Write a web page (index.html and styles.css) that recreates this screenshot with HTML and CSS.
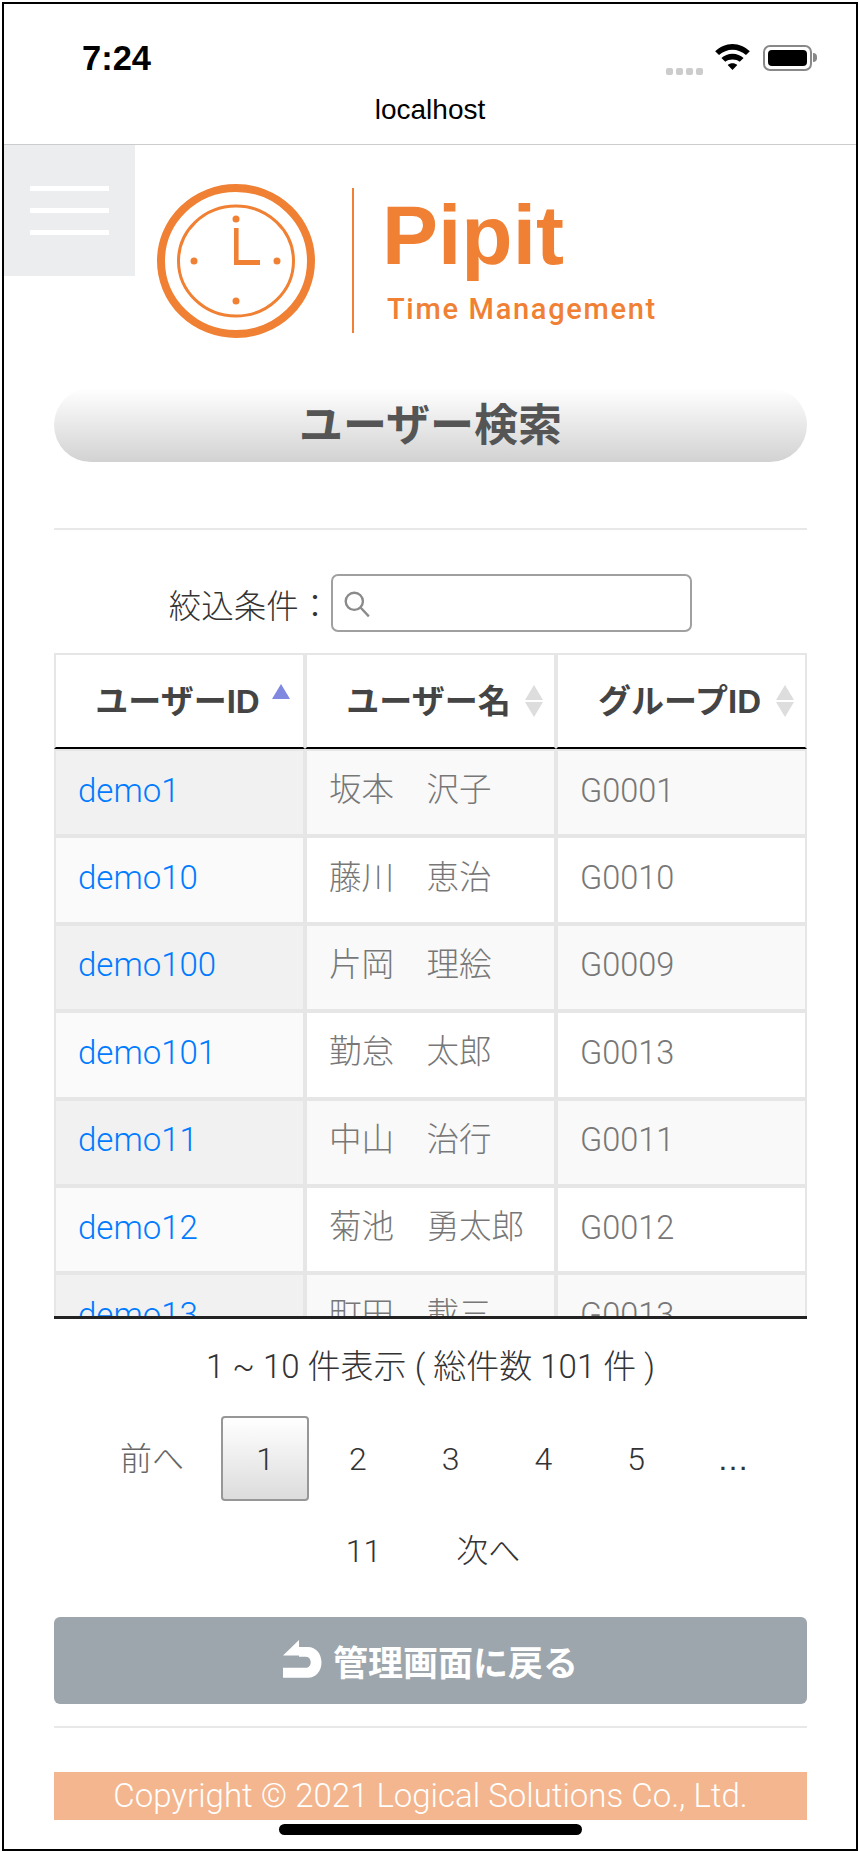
FILE: index.html
```html
<!DOCTYPE html>
<html lang="ja">
<head>
<meta charset="utf-8">
<title>Pipit</title>
<link rel="stylesheet" href="styles.css">
</head>
<body>
<div class="device">
  <header class="statusbar">
    <span class="time">7:24</span>
    <div class="status-icons">
      <div class="signal"><i></i><i></i><i></i><i></i></div>
      <svg class="wifi" viewBox="0 0 36 27" width="35" height="26"><path d="M18 0C11 0 5 3 0 7.500l4 4C8 8 13 6 18 6s10 2 14 5.500l4-4C31 3 25 0 18 0z"/><path d="M18 10c-4.500 0-8.500 1.800-11.500 4.500l4 4C12.500 16.800 15 16 18 16s5.500.8 7.500 2.500l4-4C26.500 11.800 22.500 10 18 10z"/><path d="M18 20c-2 0-3.500.6-5 1.800L18 27l5-5.200C21.500 20.600 20 20 18 20z"/></svg>
      <div class="battery"><span class="battery-fill"></span></div>
      <span class="battery-tip"></span>
    </div>
  </header>
  <div class="urlbar">localhost</div>
  <main class="page">
    <div class="topbar">
      <button class="menu" aria-label="menu"><span></span><span></span><span></span></button>
      <div class="logo">
        <svg class="clock" viewBox="0 0 160 156" width="160" height="156">
          <ellipse cx="80" cy="78" rx="75" ry="73" class="ring-o"/>
          <ellipse cx="80" cy="78" rx="57.500" ry="55" class="ring-i"/>
          <circle cx="80" cy="36" r="3.500"/><circle cx="80" cy="118" r="3.500"/>
          <circle cx="38" cy="78" r="3.500"/><circle cx="121" cy="78" r="3.500"/>
          <path d="M78 45h4.600v32H104v5H78z"/>
        </svg>
        <span class="logo-rule"></span>
        <div class="logo-text">
          <span class="logo-name">Pipit</span>
          <span class="logo-sub">Time Management</span>
        </div>
      </div>
    </div>
    <div class="content">
      <h1 class="title">ユーザー検索</h1>
      <hr class="rule rule-top">
      <div class="filter">
        <label class="filter-label" for="q">絞込条件：</label>
        <div class="search">
          <svg viewBox="0 0 26 26" width="28" height="28"><circle cx="10.500" cy="10.500" r="8" /><path d="M16.500 16.500l7.500 8"/></svg>
          <input id="q" type="text">
        </div>
      </div>
      <div class="table-wrap">
        <table class="grid">
          <thead>
            <tr>
              <th class="c1"><span class="th-label">ユーザーID</span><span class="sort only-up"></span></th>
              <th class="c2"><span class="th-label">ユーザー名</span><span class="sort"></span></th>
              <th class="c3"><span class="th-label">グループID</span><span class="sort"></span></th>
            </tr>
          </thead>
          <tbody>
            <tr class="odd"><td><a href="#">demo1</a></td><td>坂本　沢子</td><td>G0001</td></tr>
            <tr><td><a href="#">demo10</a></td><td>藤川　恵治</td><td>G0010</td></tr>
            <tr class="odd"><td><a href="#">demo100</a></td><td>片岡　理絵</td><td>G0009</td></tr>
            <tr><td><a href="#">demo101</a></td><td>勤怠　太郎</td><td>G0013</td></tr>
            <tr class="odd"><td><a href="#">demo11</a></td><td>中山　治行</td><td>G0011</td></tr>
            <tr><td><a href="#">demo12</a></td><td>菊池　勇太郎</td><td>G0012</td></tr>
            <tr class="odd"><td><a href="#">demo13</a></td><td>町田　載三</td><td>G0013</td></tr>
          </tbody>
        </table>
      </div>
      <p class="info">1 ~ 10 件表示 ( 総件数 101 件 )</p>
      <nav class="pager">
        <a class="pg pg-text pg-prev">前へ</a>
        <a class="pg current">1</a>
        <a class="pg">2</a>
        <a class="pg">3</a>
        <a class="pg">4</a>
        <a class="pg">5</a>
        <span class="pg ellipsis">…</span>
        <a class="pg pg-low">11</a>
        <a class="pg pg-text pg-low">次へ</a>
      </nav>
      <a class="back">
        <svg viewBox="0 0 39 38" width="39" height="38"><path class="back-fill" d="M16 0L0 15.500H16V16.700H23C26 16.700 27.700 19.500 27.700 22.200C27.700 25 26 27.700 23 27.700H0V37.700H25C33 37.700 38.500 31 38.500 22.500C38.500 14 33 7 25 7H16Z"/></svg>
        <span>管理画面に戻る</span>
      </a>
      <hr class="rule rule-bottom">
      <footer class="copyright">Copyright © 2021 Logical Solutions Co., Ltd.</footer>
    </div>
    <div class="homebar"></div>
  </main>
</div>
</body>
</html>
```
FILE: styles.css
```css
* { box-sizing: border-box; }
html, body { margin: 0; padding: 0; background: #fff; }
body {
  font-family: "Liberation Sans", "Noto Sans CJK JP", sans-serif;
  color: #333;
}
.device {
  width: 856px;
  height: 1849px;
  margin: 2px 0 0 2px;
  border: 2px solid #000;
  overflow: hidden;
  background: #fff;
  display: flex;
  flex-direction: column;
}
.statusbar {
  height: 82px;
  display: flex;
  justify-content: space-between;
  align-items: flex-start;
  padding: 36px 0 0 78px;
}
.time { font-size: 34.500px; font-weight: 700; line-height: 36px; color: #000; }
.status-icons { display: flex; align-items: flex-start; padding: 4px 39px 0 0; }
.signal { display: flex; gap: 3px; margin: 24px 12px 0 0; }
.signal i { width: 7px; height: 7px; border-radius: 2px; background: #ccc; display: block; }
.wifi { fill: #000; margin-right: 13px; }
.battery {
  width: 49px; height: 26px; padding: 3px; margin-top: 1px;
  border: 2px solid #888; border-radius: 7px;
}
.battery-fill { display: block; width: 100%; height: 100%; background: #000; border-radius: 4px; }
.battery-tip { width: 4px; height: 9px; margin: 9px 0 0 1px; background: #888; border-radius: 0 4px 4px 0; }
.urlbar {
  height: 59px;
  font-size: 28px;
  line-height: 34px;
  text-align: center;
  color: #000;
  border-bottom: 1px solid #ccc;
  padding-top: 7px;
}
.page { flex: 1; display: flex; flex-direction: column; position: relative; }
.topbar { height: 243px; position: relative; }
.menu {
  position: absolute; left: 0; top: 0;
  width: 131px; height: 131px;
  background: #ecedef; border: 0; padding: 41px 26px 0 26px;
  display: flex; flex-direction: column; gap: 17px;
}
.menu span { display: block; width: 79px; height: 5px; background: #fff; }
.logo { position: absolute; left: 152px; top: 38px; display: flex; align-items: flex-start; }
.clock { fill: #f08033; }
.ring-o { fill: none; stroke: #f08033; stroke-width: 8; }
.ring-i { fill: none; stroke: #f08033; stroke-width: 3; }
.logo-rule { width: 2px; height: 145px; background: #f08033; margin: 5px 0 0 36px; }
.logo-text { margin-left: 28px; display: flex; flex-direction: column; color: #f08033; }
.logo-name { font-size: 84px; font-weight: 700; line-height: 100px; margin-top: 2px; }
.logo-sub { font-family: "Roboto", sans-serif; font-size: 29px; font-weight: 500; letter-spacing: 1.700px; line-height: 36px; margin: 6px 0 0 5px; white-space: nowrap; }
.content { padding: 0 49px 0 50px; display: flex; flex-direction: column; }
.title {
  margin: 0;
  height: 74px;
  border-radius: 37px;
  background: linear-gradient(#fff, #d2d2d2);
  font-size: 44px;
  line-height: 76px;
  font-weight: 700;
  text-align: center;
  color: #555;
}
.rule { border: 0; height: 2px; background: #e8e8e8; margin: 0; }
.rule-top { margin-top: 66px; }
.filter { display: flex; align-items: center; justify-content: center; margin-top: 44px; height: 58px; }
.filter-label { font-size: 32.500px; font-weight: 300; color: #333; }
.search { position: relative; width: 361px; height: 58px; }
.search svg { position: absolute; left: 12px; top: 16px; fill: none; stroke: #8a8a8a; stroke-width: 2.200; }
.search input { width: 100%; height: 100%; border: 2px solid #a0a0a0; border-radius: 7px; background: #fff; outline: none; }
.table-wrap { margin-top: 21px; height: 666px; overflow: hidden; border-bottom: 3px solid #222; }
.grid { width: 100%; border-collapse: separate; border-spacing: 0; table-layout: fixed; }
.grid th {
  height: 96px;
  background: #fff;
  border: 2px solid #e6e6e6;
  border-bottom: 2px solid #000;
  font-size: 33px;
  font-weight: 700;
  color: #444;
  position: relative;
  text-align: center;
  padding: 0 4px 4px 0;
}
.c1 { width: 251px; }
.c2 { width: 251px; }
.c3 { width: 251px; }
.sort { position: absolute; right: 11px; top: 30px; width: 18px; height: 32px; }
.sort::before, .sort::after {
  content: ""; position: absolute; left: 0; width: 0; height: 0;
  border-left: 9px solid transparent; border-right: 9px solid transparent;
}
.sort::before { top: 0; border-bottom: 15px solid #ddd; }
.sort::after { bottom: 0; border-top: 15px solid #ddd; }
.only-up { right: 13px; top: 29px; }
.only-up::before { border-bottom-color: #8088e0; }
.only-up::after { display: none; }
.grid td {
  height: 87.400px;
  padding: 0 0 4px 22px;
  border: 2px solid #e6e6e6;
  font-family: "Roboto", "Noto Sans CJK JP", sans-serif;
  font-size: 32.500px;
  font-weight: 300;
  line-height: 40px;
  color: #777;
  background: #fff;
  white-space: nowrap;
}
.grid td:nth-child(2) { padding-bottom: 5px; }
.grid td:first-child { background: #fafafa; }
.odd td { background: #f9f9f9; }
.odd td:first-child { background: #f1f1f1; }
.grid a { color: #007bff; text-decoration: none; font-size: 33px; font-weight: 300; }
.info { margin: 28px 0 0; text-align: center; font-family: "Roboto", "Noto Sans CJK JP", sans-serif; font-size: 33px; line-height: 40px; font-weight: 300; color: #333; }
.pager { display: flex; flex-wrap: wrap; justify-content: center; margin-top: 29px; }
.pg {
  display: block; height: 85px; line-height: 82px;
  padding: 0 33px; border: 2px solid transparent; margin-left: 5px;
  font-family: "Roboto", "Noto Sans CJK JP", sans-serif;
  font-size: 32px; font-weight: 300; color: #333;
}
.pg-prev { color: #666; padding-right: 30px; }
.current { background: linear-gradient(#fff, #dcdcdc); border-color: #979797; border-radius: 4px; }
.ellipsis { padding: 0 30px; font-family: "Liberation Sans", sans-serif; }
.pg-low { height: 95px; line-height: 97px; }
.back {
  margin-top: 21px;
  height: 87px;
  border-radius: 6px;
  background: #9ea6ad;
  display: flex; align-items: center; justify-content: center; gap: 11px;
  color: #fff; font-size: 35px; font-weight: 700;
}
.back svg { margin-top: -3px; }
.back-fill { fill: #fff; }
.rule-bottom { margin-top: 22px; }
.copyright {
  margin-top: 44px;
  height: 48px;
  background: #f4b68e;
  color: #fff;
  text-align: center;
  font-family: "Roboto", sans-serif;
  font-size: 33px;
  line-height: 48px;
  font-weight: 300;
}
.homebar {
  position: absolute; left: 275px; bottom: 14px;
  width: 303px; height: 11px; border-radius: 6px; background: #000;
}
```
